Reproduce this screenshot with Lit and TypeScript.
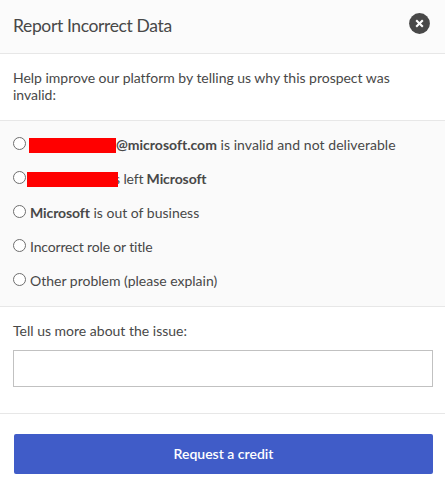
import { LitElement, html, css } from "lit";
import { customElement } from "lit/decorators.js";

@customElement("app-root")
export class AppRoot extends LitElement {
  static styles = css`
    :host {
      display: block;
      width: 445px;
      height: 484px;
      overflow: hidden;
      background: #fff;
      color: #484848;
      font: 14px/17px Lato, "Open Sans", sans-serif;
      font-variant-ligatures: none;
    }
    * { box-sizing: border-box; }
    header {
      height: 54px;
      padding: 0 15px 7px 13px;
      display: flex;
      align-items: center;
      justify-content: space-between;
      background: #fbfbfb;
      border-bottom: 1px solid #e7e7e7;
    }
    h1 {
      margin: 6px 0 0;
      font-size: 17.5px;
      line-height: 22px;
      font-weight: 400;
      letter-spacing: -0.37px;
      white-space: nowrap;
    }
    .close { display: block; width: 21px; height: 21px; }
    .intro { height: 67px; padding: 15px 13px 0; border-bottom: 1px solid #e7e7e7; }
    .intro p { margin: 0; white-space: nowrap; letter-spacing: -0.02px; }
    .options {
      height: 186px;
      padding: 7px 13px 9px;
      background: #fafafa;
      border-bottom: 1px solid #e7e7e7;
    }
    .option { height: 34px; display: flex; align-items: center; white-space: pre; }
    .option b, .option span { margin-bottom: 1px; }
    .option .loose { letter-spacing: 0.06px; }
    .option .tight { letter-spacing: -0.16px; }
    .option .company { letter-spacing: -0.1px; }
    .radio {
      appearance: none;
      flex: none;
      width: 13px;
      height: 13px;
      margin: 0 4px 4px 0;
      border: 1px solid #6e6e6e;
      border-radius: 50%;
      background: #fff;
    }
    .option .mask { flex: none; height: 15px; margin-bottom: 0; background: #f00; position: relative; z-index: 1; }
    .option .email { width: 87px; margin-left: -1px; }
    .option .name { width: 91px; margin-left: -3px; }
    .tail { margin-left: -4px; }
    .left { letter-spacing: -0.2px; }
    .more { height: 107px; padding: 15px 12px 0 13px; border-bottom: 1px solid #e7e7e7; }
    .more label { display: block; }
    .more input {
      display: block;
      width: 420px;
      height: 37px;
      margin-top: 11px;
      border: 1px solid #c1c1c1;
      border-radius: 0;
      background: #fff;
    }
    footer { padding: 20px 12px 0 14px; }
    button {
      display: block;
      width: 419px;
      height: 40px;
      padding: 0 0 2px;
      border: 0;
      border-radius: 2px;
      background: #405cc8;
      color: #fff;
      font: 600 14px/17px Lato, sans-serif;
    }
  `;

  render() {
    return html`
      <header>
        <h1>Report Incorrect Data</h1>
        <svg class="close" viewBox="0 0 21 21" role="img" aria-label="Close">
          <circle cx="10.5" cy="10.5" r="10.4" fill="#484848" />
          <path d="M7.2 7.2l6.6 6.6M13.8 7.2l-6.6 6.6" stroke="#fff" stroke-width="2.1" />
        </svg>
      </header>
      <section class="intro">
        <p>Help improve our platform by telling us why this prospect was</p>
        <p>invalid:</p>
      </section>
      <section class="options">
        <label class="option"><input class="radio" type="radio" name="reason" /><span class="mask email"></span><b>@microsoft.com</b><span class="loose"> is invalid and not deliverable</span></label>
        <label class="option"><input class="radio" type="radio" name="reason" /><span class="mask name"></span><span class="tail">s</span><span class="left"> left </span><b class="company">Microsoft</b></label>
        <label class="option"><input class="radio" type="radio" name="reason" /><b class="company">Microsoft</b><span> is out of business</span></label>
        <label class="option"><input class="radio" type="radio" name="reason" /><span class="tight">Incorrect role or title</span></label>
        <label class="option"><input class="radio" type="radio" name="reason" /><span>Other problem (please explain)</span></label>
      </section>
      <section class="more">
        <label for="issue">Tell us more about the issue:</label>
        <input id="issue" type="text" />
      </section>
      <footer><button>Request a credit</button></footer>
    `;
  }
}
